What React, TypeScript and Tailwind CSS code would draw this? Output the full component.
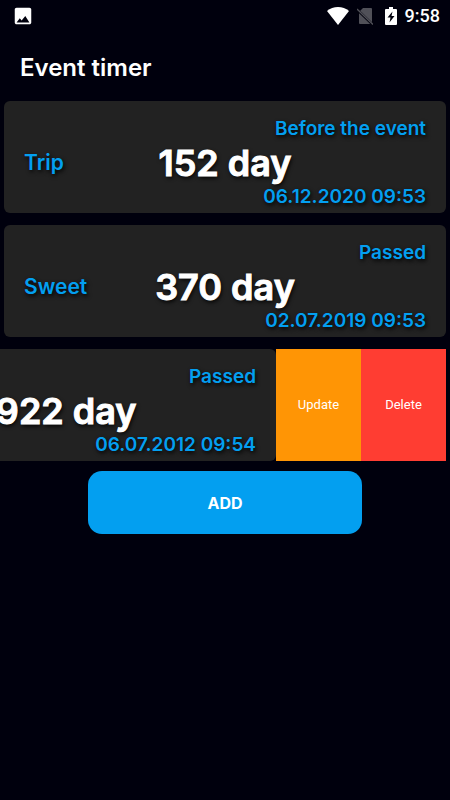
import { useState } from "react"

type EventItem = {
    name: string
    status: string
    count: string
    date: string
}

const initialEvents: EventItem[] = [
    { name: "Trip", status: "Before the event", count: "152 day", date: "06.12.2020 09:53" },
    { name: "Sweet", status: "Passed", count: "370 day", date: "02.07.2019 09:53" },
    { name: "", status: "Passed", count: "2922 day", date: "06.07.2012 09:54" },
]

function StatusBar() {
    return (
        <div className="flex h-8 items-center justify-between pl-3 pr-[10px]">
            <svg className="size-[22px]" viewBox="0 0 24 24" fill="#fff">
                <path d="M21 19V5c0-1.1-.9-2-2-2H5c-1.1 0-2 .9-2 2v14c0 1.1.9 2 2 2h14c1.1 0 2-.9 2-2zM5 19l3.500-4.500 2 2.500L14.500 12 19 19z" />
            </svg>
            <div className="flex items-center">
                {/* Wifi */}
                <svg className="h-[18px] w-[22px]" viewBox="0 0 22 18" fill="#fff">
                    <path d="M11 18 0 4C3 1.500 7 0 11 0s8 1.500 11 4z" />
                </svg>
                {/* No sim */}
                <svg className="ml-2 h-[18px] w-4" viewBox="0 0 16 18">
                    <path d="M6 1h8q1 0 1 1v14q0 1-1 1H3q-1 0-1-1V5z" fill="#505058" />
                    <path d="M-1 1.500 16 18" stroke="#00000d" strokeWidth="2.500" />
                    <path d="M0 2 16 17.500" stroke="#505058" strokeWidth="1.300" />
                </svg>
                {/* Battery */}
                <svg className="ml-3 h-[18px] w-3" viewBox="0 0 12 18">
                    <path d="M4 0h4v2h3q1 0 1 1v14q0 1-1 1H1q-1 0-1-1V3q0-1 1-1h3z" fill="#fff" />
                    <path d="M7.500 4.500 2.500 10.500h3L4.500 15.500 9.500 9h-3z" fill="#00000d" />
                </svg>
                <span className="ml-2 font-[Roboto,sans-serif] text-lg font-medium">9:58</span>
            </div>
        </div>
    )
}

function EventCard({ event }: { event: EventItem }) {
    return (
        <div className="w-full shrink-0 rounded-md bg-[#222222] px-5 pt-4 pb-1 font-semibold text-[#039ff0] [text-shadow:1px_2px_4px_#000]">
            <p className="h-6 text-right text-[19px] leading-6">{event.status}</p>
            <div className="grid h-11 grid-cols-[1fr_auto_1fr] items-center">
                <h2 className="text-[21px]">{event.name}</h2>
                <p className="whitespace-nowrap text-4xl font-semibold text-white [-webkit-text-stroke:1px_#fff] [stroke-linejoin:round]">{event.count}</p>
            </div>
            <p className="h-6 text-right text-[19px] leading-6">{event.date}</p>
        </div>
    )
}

export default function App() {
    const [events] = useState(initialEvents)
    const [openIndex] = useState(2)

    return (
        <div className="min-h-screen overflow-hidden bg-[#00000d] font-[Inter,sans-serif] text-white">
            <StatusBar />
            <h1 className="px-5 pt-5 pb-[17px] text-2xl font-semibold">Event timer</h1>

            <ul className="flex flex-col gap-3 px-1">
                {events.map((event, index) => (
                    <li key={event.date} className="flex justify-end">
                        <EventCard event={event} />
                        {/* Swipe actions */}
                        {index === openIndex && (
                            <div className="flex w-[170px] shrink-0 font-[Roboto,sans-serif] text-[13px]">
                                <button className="flex-1 bg-[#ff9505]">Update</button>
                                <button className="flex-1 bg-[#ff3d32]">Delete</button>
                            </div>
                        )}
                    </li>
                ))}
            </ul>

            <div className="flex justify-center pt-[10px]">
                <button className="h-[63px] w-[61%] rounded-[14px] bg-[#039ff0] text-base font-bold">ADD</button>
            </div>
        </div>
    )
}
